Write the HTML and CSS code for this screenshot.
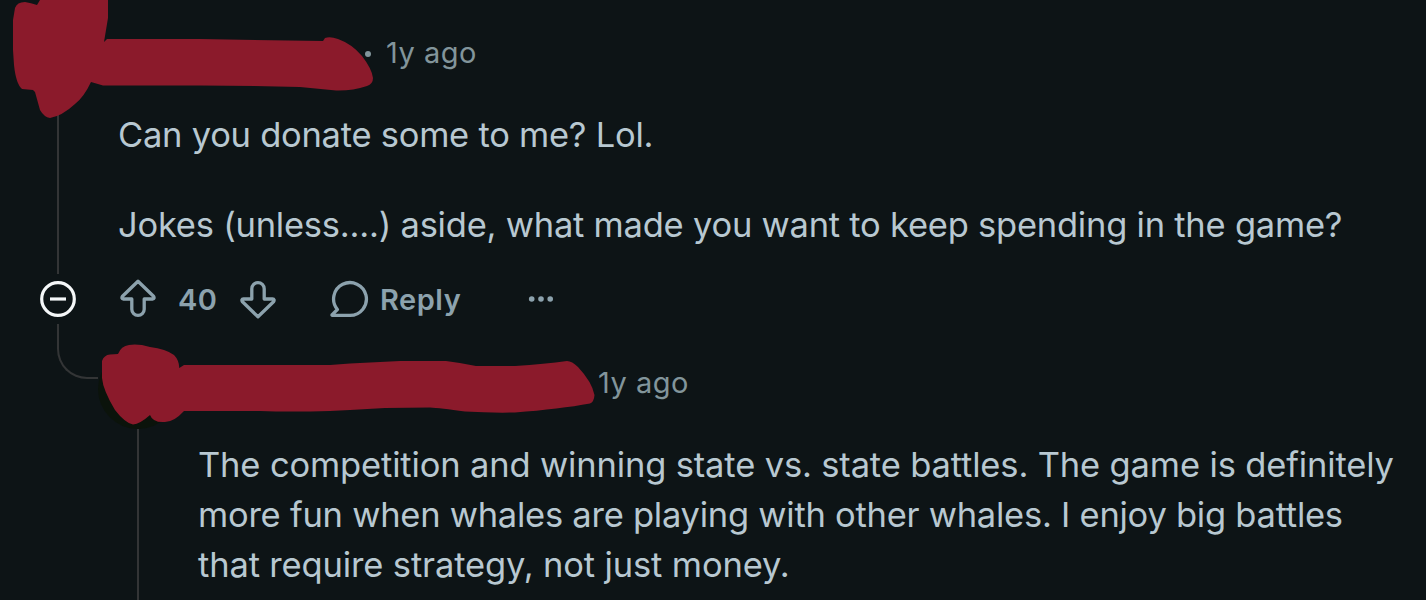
FILE: index.html
```html
<!DOCTYPE html>
<html lang="en">
<head>
<meta charset="utf-8">
<title>Comments</title>
<link rel="stylesheet" href="styles.css">
</head>
<body>
<main class="thread">
  <article class="comment">
    <div class="rail">
      <div class="line line-top"></div>
      <svg class="collapse" width="36" height="36" viewBox="0 0 36 36"><circle cx="18" cy="18" r="16.3"/><path d="M10 18H26"/></svg>
      <div class="elbow"></div>
    </div>
    <div class="content">
      <header class="meta"><span class="dot"></span><time>1y ago</time></header>
      <div class="body">
        <p><span class="l1">Can you donate some to me? Lol.</span></p>
        <p><span class="l2">Jokes (unless....) aside, what made you want to keep spending in the game?</span></p>
      </div>
      <div class="actions">
        <svg class="icon up" width="40" height="40" viewBox="0 0 40 40"><path d="M20 3.2L4.5 18.2Q2.9 20.8 5.5 21H13.8V31.2a6.2 6.2 0 0 0 12.4 0V21H34.5Q37.1 20.8 35.5 18.2Z"/></svg>
        <span class="score">40</span>
        <svg class="icon down" width="40" height="40" viewBox="0 0 40 40"><path d="M20 36.8L4.5 21.8Q2.9 19.2 5.5 19H13.8V8.8a6.2 6.2 0 0 1 12.4 0V19H34.5Q37.1 19.2 35.5 21.8Z"/></svg>
        <svg class="icon bubble" width="40" height="38" viewBox="0 0 40 38"><path d="M20 35.4A16.4 16.4 0 1 0 7.400 29.500L2.200 34.600Q1.600 35.400 2.600 35.400Z"/></svg>
        <span class="reply">Reply</span>
        <svg class="more" width="26" height="8" viewBox="0 0 26 8"><circle cx="3.7" cy="4" r="2.8"/><circle cx="13" cy="4" r="2.8"/><circle cx="22.2" cy="4" r="2.8"/></svg>
      </div>
    </div>
  </article>
  <article class="comment child">
    <div class="rail"><div class="line"></div></div>
    <div class="content">
      <header class="meta"><time>1y ago</time></header>
      <div class="body">
        <p><span class="l3">The competition and winning state vs. state battles. The game is definitely</span><br><span class="l4">more fun when whales are playing with other whales. I enjoy big battles</span><br><span class="l5">that require strategy, not just money.</span></p>
      </div>
    </div>
  </article>
  <svg class="scribbles" width="1426" height="600" viewBox="0 0 1426 600">
    <circle class="avatar" cx="138" cy="389" r="40"/>
    <path d="M15 8Q17 2 25 2Q31 3 37 5L40 0H108V18L106 30L104 42L107 39H200L323 41L325 38Q330 36 338 39Q352 44 362 56Q372 69 373 78Q373 84 367 86Q352 91 336 90.5L300 87Q250 85.500 200 85.500H103L91 82Q84 97 75 104Q62 116 50 118Q44 117 40 110L35 92L33 90L22 89Q16 84 14 65L13 50V20Z"/>
    <path d="M102 361Q104 355 110 354.500L118 354Q121 346 129 345Q138 343.500 150 347Q166 349 174 355Q179 360 179.300 368L184 365H330L350 363.500L400 361H446Q462 363 476 366H515Q545 364 567 361Q572 361 578 367Q592 382 594.500 395Q594 402 590 403.500Q560 409 515 412.500Q490 413 465 411.500Q440 408 430 407.500L385 408L350 410L330 411Q290 412 260 411H184Q174 422 165 422Q153 423 150 415Q140 424 133 424.500Q125 423 115 410Q103 390 102 378Z"/>
  </svg>
</main>
</body>
</html>
```
FILE: styles.css
```css
* { box-sizing: border-box; }
body { margin: 0; background: #0d1416; font-family: Inter, "Liberation Sans", sans-serif; }
.thread { position: relative; width: 1426px; height: 600px; overflow: hidden; }
.comment { display: flex; }
.rail { width: 118px; flex: none; display: flex; flex-direction: column; }
.line { width: 2px; background: #333536; margin-left: 57px; flex: 1; }
.line-top { flex: none; height: 274px; }
.collapse { margin: 7px 0 7px 40px; fill: none; stroke: #f4f7f8; stroke-width: 3.2; }
.elbow { width: 41px; height: 55px; margin-left: 57px; border: solid #333536; border-width: 0 0 2px 2px; border-bottom-left-radius: 30px; }
.content { flex: 1; white-space: nowrap; }
.meta { display: flex; align-items: center; height: 50px; color: #82959b; font-size: 29px; letter-spacing: 0.5px; }
.comment > .content > .meta { padding: 0 0 0 247px; margin-top: 28px; }
.meta time { margin-top: -2px; }
.dot { width: 6px; height: 6px; border-radius: 50%; background: #82959b; margin: 2px 15px 0 0; }
.body { margin: 32px 0 0 0; color: #b8c8d1; font-size: 34.5px; line-height: 50px; }
.body p { margin: 0 0 40px; }
.l1 { letter-spacing: -0.25px; }
.l2 { letter-spacing: -0.23px; }
.l3 { letter-spacing: -0.15px; }
.l4 { letter-spacing: -0.25px; }
.l5 { letter-spacing: -0.14px; }
.actions { display: flex; align-items: flex-start; height: 80px; margin-top: -12px; color: #8ca2ad; font-size: 29px; line-height: 44px; font-weight: 600; }
.icon { fill: none; stroke: #8ca2ad; stroke-width: 3.3; stroke-linejoin: round; flex: none; }
.score { width: 60px; margin-left: 20px; letter-spacing: 0.5px; }
.down { margin-top: 2px; }
.bubble { margin: 2px 0 0 52px; }
.reply { width: 138px; margin-left: 10px; letter-spacing: 0.5px; }
.more { margin: 17px 0 0 10px; fill: #8ca2ad; }
.child { height: 300px; margin: -22px 0 0 80px; }
.child .rail { padding-top: 72px; }
.child > .content > .meta { margin-top: 1px; padding-left: 400px; }
.scribbles { position: absolute; left: 0; top: 0; fill: #8b1a2b; }
.avatar { fill: #0b130b; }
```
